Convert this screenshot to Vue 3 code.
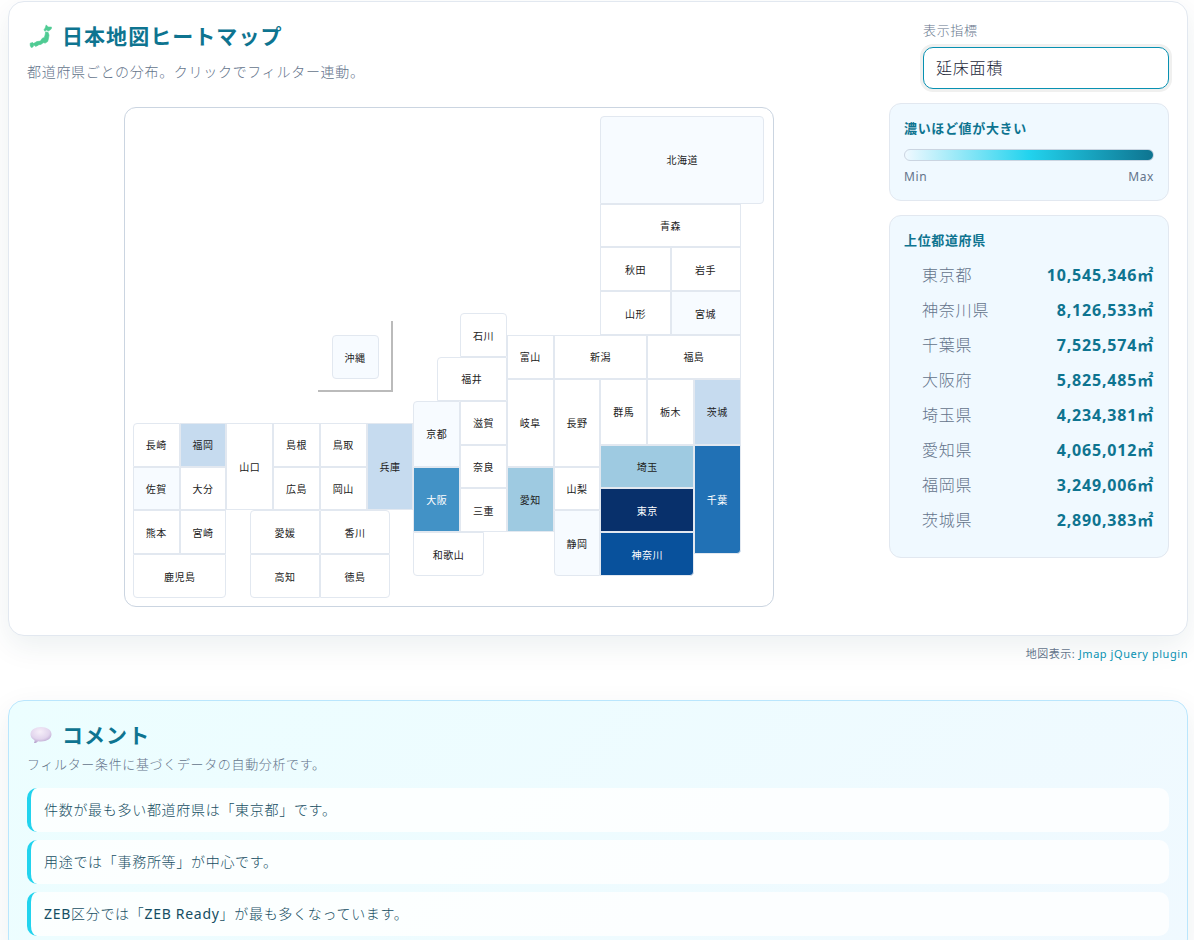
<script setup>
import { ref } from 'vue'

const metric = ref('area')

const prefectures = [
  { name: '北海道', c: 20, r: 0, w: 7, h: 4, level: 1, round: ['tl', 'tr', 'br'] },
  { name: '青森', c: 20, r: 4, w: 6, h: 2 },
  { name: '秋田', c: 20, r: 6, w: 3, h: 2 },
  { name: '岩手', c: 23, r: 6, w: 3, h: 2 },
  { name: '山形', c: 20, r: 8, w: 3, h: 2 },
  { name: '宮城', c: 23, r: 8, w: 3, h: 2, level: 1 },
  { name: '福島', c: 22, r: 10, w: 4, h: 2 },
  { name: '茨城', c: 24, r: 12, w: 2, h: 3, level: 2 },
  { name: '栃木', c: 22, r: 12, w: 2, h: 3 },
  { name: '群馬', c: 20, r: 12, w: 2, h: 3 },
  { name: '埼玉', c: 20, r: 15, w: 4, h: 2, level: 3 },
  { name: '千葉', c: 24, r: 15, w: 2, h: 5, level: 5, round: ['br'] },
  { name: '東京', c: 20, r: 17, w: 4, h: 2, level: 7 },
  { name: '神奈川', c: 20, r: 19, w: 4, h: 2, level: 6, round: ['br'] },
  { name: '新潟', c: 18, r: 10, w: 4, h: 2 },
  { name: '富山', c: 16, r: 10, w: 2, h: 2 },
  { name: '石川', c: 14, r: 9, w: 2, h: 2, round: ['tl', 'tr'] },
  { name: '福井', c: 13, r: 11, w: 3, h: 2, round: ['tl'] },
  { name: '山梨', c: 18, r: 16, w: 2, h: 2 },
  { name: '長野', c: 18, r: 12, w: 2, h: 4 },
  { name: '岐阜', c: 16, r: 12, w: 2, h: 4 },
  { name: '静岡', c: 18, r: 18, w: 2, h: 3, level: 1, round: ['bl'] },
  { name: '愛知', c: 16, r: 16, w: 2, h: 3, level: 3 },
  { name: '三重', c: 14, r: 17, w: 2, h: 2 },
  { name: '滋賀', c: 14, r: 13, w: 2, h: 2 },
  { name: '京都', c: 12, r: 13, w: 2, h: 3, level: 1, round: ['tl'] },
  { name: '大阪', c: 12, r: 16, w: 2, h: 3, level: 4 },
  { name: '兵庫', c: 10, r: 14, w: 2, h: 4, level: 2 },
  { name: '奈良', c: 14, r: 15, w: 2, h: 2 },
  { name: '和歌山', c: 12, r: 19, w: 3, h: 2, round: ['bl', 'br'] },
  { name: '鳥取', c: 8, r: 14, w: 2, h: 2 },
  { name: '島根', c: 6, r: 14, w: 2, h: 2 },
  { name: '岡山', c: 8, r: 16, w: 2, h: 2 },
  { name: '広島', c: 6, r: 16, w: 2, h: 2 },
  { name: '山口', c: 4, r: 14, w: 2, h: 4 },
  { name: '徳島', c: 8, r: 20, w: 3, h: 2, round: ['br'] },
  { name: '香川', c: 8, r: 18, w: 3, h: 2, round: ['tr'] },
  { name: '愛媛', c: 5, r: 18, w: 3, h: 2, round: ['tl'] },
  { name: '高知', c: 5, r: 20, w: 3, h: 2, round: ['bl'] },
  { name: '福岡', c: 2, r: 14, w: 2, h: 2, level: 2 },
  { name: '佐賀', c: 0, r: 16, w: 2, h: 2, level: 1 },
  { name: '長崎', c: 0, r: 14, w: 2, h: 2, round: ['tl'] },
  { name: '熊本', c: 0, r: 18, w: 2, h: 2 },
  { name: '大分', c: 2, r: 16, w: 2, h: 2 },
  { name: '宮崎', c: 2, r: 18, w: 2, h: 2 },
  { name: '鹿児島', c: 0, r: 20, w: 4, h: 2, round: ['bl', 'br'] },
]

const area = (p) => ({
  gridColumn: `${p.c + 1} / span ${p.w}`,
  gridRow: `${p.r + 1} / span ${p.h}`,
})

const ranking = [
  ['東京都', '10,545,346㎡'],
  ['神奈川県', '8,126,533㎡'],
  ['千葉県', '7,525,574㎡'],
  ['大阪府', '5,825,485㎡'],
  ['埼玉県', '4,234,381㎡'],
  ['愛知県', '4,065,012㎡'],
  ['福岡県', '3,249,006㎡'],
  ['茨城県', '2,890,383㎡'],
]

const comments = [
  '件数が最も多い都道府県は「東京都」です。',
  '用途では「事務所等」が中心です。',
  'ZEB区分では「ZEB Ready」が最も多くなっています。',
]

// Splits a sentence into Latin and Japanese runs, which carry different weights.
const runs = (text) =>
  text
    .split(/([A-Za-z][A-Za-z ]*)/)
    .filter(Boolean)
    .map((part) => ({ part, latin: /^[A-Za-z]/.test(part) }))
</script>

<template>
  <main class="page">
    <section class="card">
      <header class="head">
        <div>
          <h2 class="title">
            <svg class="icon" viewBox="0 0 24 24" aria-hidden="true">
              <g fill="#4fcb93" stroke="#4fcb93" stroke-width="0.6" stroke-linejoin="round">
                <path d="M17.2 .9 19.200 3l3.300.1-.3 2-2.700 1.900-2-.9-1.600 1.200-.9-1.500 1.200-1.800z" />
                <path d="M16.600 8l2.400.200 1 2.900-.5 3.300-.8 3.100-2.400 1.600-2-.4-2.400 1.700-3.500.5-1.700.7-2-.3-.2-1.700 3.300-2 3.600-.5 1.700-2.700 2.200-1 .8-2.400z" />
                <path d="M5.800 20.200l3.200-.5.200 1.500-2.600 1.300z" />
                <path d="M1.200 19.200l2.500-.7 1.200 1.300-.9 3.200-1.900.4-.9-2.200z" />
              </g>
            </svg>
            日本地図ヒートマップ
          </h2>
          <p class="hint">都道府県ごとの分布。クリックでフィルター連動。</p>
        </div>
        <div class="field">
          <label for="metric">表示指標</label>
          <select id="metric" v-model="metric">
            <option value="area">延床面積</option>
            <option value="count">件数</option>
          </select>
        </div>
      </header>

      <div class="body">
        <div class="map">
          <button
            v-for="p in prefectures"
            :key="p.name"
            type="button"
            class="pref"
            :class="[`level-${p.level || 0}`, p.round]"
            :style="area(p)"
          >{{ p.name }}</button>
          <div class="okinawa">
            <button type="button" class="pref level-1 tl tr bl br">沖縄</button>
          </div>
        </div>

        <aside class="side">
          <div class="panel">
            <h3>濃いほど値が大きい</h3>
            <div class="scale"></div>
            <div class="ends"><span>Min</span><span>Max</span></div>
          </div>
          <div class="panel">
            <h3>上位都道府県</h3>
            <ol class="ranking">
              <li v-for="[name, value] in ranking" :key="name">
                <span>{{ name }}</span><strong>{{ value }}</strong>
              </li>
            </ol>
          </div>
        </aside>
      </div>
    </section>

    <p class="credit">地図表示: <a href="#">Jmap jQuery plugin</a></p>

    <section class="card comments">
      <h2 class="title">
        <svg class="icon" viewBox="0 0 24 24" aria-hidden="true">
          <defs>
            <radialGradient id="bubble" cx="0.45" cy="0.3" r="0.75">
              <stop offset="0" stop-color="#f6eff9" />
              <stop offset="0.6" stop-color="#e2d5ed" />
              <stop offset="1" stop-color="#b09ac8" />
            </radialGradient>
          </defs>
          <path fill="url(#bubble)" d="M12 4c6 0 10.500 3 10.500 7.300S18 18.500 12 18.500c-1 0-2-.1-2.900-.3C8 19.500 6.500 20 5 20c.5-.8.700-1.700.500-2.800C3 15.900 1.500 13.800 1.500 11.300 1.500 7 6 4 12 4z" />
        </svg>
        コメント
      </h2>
      <p class="subhint">フィルター条件に基づくデータの自動分析です。</p>
      <ul class="notes">
        <li v-for="text in comments" :key="text">
          <span v-for="(run, i) in runs(text)" :key="i" :class="{ latin: run.latin }">{{ run.part }}</span>
        </li>
      </ul>
    </section>
  </main>
</template>

<style>
body {
  margin: 0;
  background: #fff;
}
</style>

<style scoped>
.page,
.page * {
  box-sizing: border-box;
  letter-spacing: 0.05em;
}

.page {
  height: 100vh;
  overflow: hidden;
  padding: 1px 6px 0 8px;
  font-family: "Noto Sans", "Noto Sans CJK JP", sans-serif;
  font-size: 16px;
  font-weight: 300;
  color: #1e293b;
}

.card {
  padding: 18px;
  border: 1px solid #e2e8f0;
  border-radius: 16px;
  background: #fff;
  box-shadow: 0 10px 30px rgba(14, 60, 80, 0.08);
}

.head {
  display: flex;
  justify-content: space-between;
  align-items: flex-start;
}

.title {
  display: flex;
  align-items: center;
  gap: 9px;
  margin: 0;
  font-size: 21px;
  line-height: 32px;
  font-weight: 700;
  color: #0e7490;
}

.icon {
  width: 24px;
  height: 24px;
  margin-left: 2px;
}

.hint {
  margin: 10px 0 0;
  font-size: 14px;
  line-height: 20px;
  color: #64748b;
}

.field {
  display: flex;
  flex-direction: column;
  gap: 7px;
  width: 246px;
}

.field label {
  font-size: 13px;
  line-height: 20px;
  color: #64748b;
}

.field select {
  appearance: none;
  height: 42px;
  padding: 0 12px;
  border: 1px solid #0891b2;
  border-radius: 10px;
  outline: none;
  background: #fff;
  box-shadow: 0 0 0 3px #f0f0ef;
  font: inherit;
  color: #1e293b;
}

.body {
  display: grid;
  grid-template-columns: 1fr 280px;
  gap: 18px;
  margin-top: 14px;
  padding-bottom: 10px;
}

.map {
  display: grid;
  grid-template-columns: repeat(27, 1fr);
  grid-template-rows: repeat(22, 1fr);
  justify-self: center;
  width: 100%;
  max-width: 650px;
  aspect-ratio: 13 / 10;
  margin-top: 4px;
  padding: 8px 9px 8px 8px;
  border: 1px solid #cbd5e1;
  border-radius: 12px;
}

.pref {
  min-width: 0;
  min-height: 0;
  padding: 0;
  border: 1px solid #e2e8f0;
  font: inherit;
  font-size: 10px;
  font-weight: 400;
  color: #222;
  cursor: pointer;
}

.level-0 { background: #fff; }
.level-1 { background: #f7fbff; }
.level-2 { background: #c6dbef; }
.level-3 { background: #9ecae1; }
.level-4 { background: #4292c6; color: #fff; }
.level-5 { background: #2171b5; color: #fff; }
.level-6 { background: #08519c; color: #fff; }
.level-7 { background: #08306b; color: #fff; }

.tl { border-top-left-radius: 4px; }
.tr { border-top-right-radius: 4px; }
.bl { border-bottom-left-radius: 4px; }
.br { border-bottom-right-radius: 4px; }

.okinawa {
  grid-column: 8 / 13;
  grid-row: 9 / 15;
  place-self: center;
  display: grid;
  padding: 14px 12px 11px 14px;
  border: solid #bbb;
  border-width: 0 2px 2px 0;
}

.okinawa .pref {
  width: 47px;
  height: 44px;
}

.side {
  display: flex;
  flex-direction: column;
  gap: 14px;
}

.panel {
  padding: 14px;
  border: 1px solid #e2e8f0;
  border-radius: 12px;
  background: #f0f9ff;
}

.panel h3 {
  margin: 0;
  font-size: 13px;
  line-height: 20px;
  font-weight: 700;
  color: #0e7490;
}

.scale {
  height: 12px;
  margin-top: 11px;
  border: 1px solid #cbd5e1;
  border-radius: 6px;
  background: linear-gradient(90deg, #f0f9ff, #22d3ee 50%, #0e7490);
}

.ends {
  display: flex;
  justify-content: space-between;
  margin-top: 7px;
  font-size: 12px;
  line-height: 18px;
  font-weight: 400;
  color: #64748b;
}

.ranking {
  margin: 8px 0 5px;
  padding: 0 0 0 18px;
  list-style: none;
}

.ranking li {
  display: flex;
  justify-content: space-between;
  line-height: 35px;
  color: #64748b;
}

.ranking strong {
  font-weight: 700;
  color: #0e7490;
}

.credit {
  margin: 8px 0 36px;
  font-size: 11px;
  line-height: 20px;
  font-weight: 400;
  text-align: right;
  color: #64748b;
}

.credit a {
  color: #0891b2;
  text-decoration: none;
}

.comments {
  border-color: #bae6fd;
  background: linear-gradient(135deg, #ecfeff, #f0f9ff);
}

.subhint {
  margin: 3px 0 0;
  font-size: 13px;
  line-height: 20px;
  color: #64748b;
}

.notes {
  display: grid;
  gap: 8px;
  margin: 14px 0 0;
  padding: 0;
  list-style: none;
}

.notes li {
  padding: 11px 13px;
  border-left: 4px solid #22d3ee;
  border-radius: 10px;
  background: rgba(255, 255, 255, 0.8);
  font-size: 14px;
  line-height: 22px;
  color: #164e63;
}

.latin {
  font-weight: 400;
}
</style>
